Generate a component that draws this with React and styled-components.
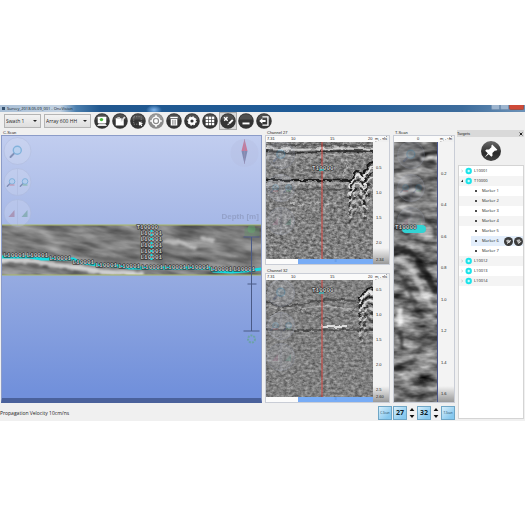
import React from 'react';
import styled, { createGlobalStyle } from 'styled-components';

const GlobalStyle = createGlobalStyle`
  * {
    box-sizing: border-box;
  }
  body {
    margin: 0;
    background: #ffffff;
    font-family: "Open Sans", "Noto Sans", sans-serif;
    color: #222222;
  }
  button, select {
    font-family: inherit;
    margin: 0;
    padding: 0;
  }
`;

const Page = styled.main`
  padding-top: 105px;
`;

const Window = styled.div`
  background: #f0f0f0;
`;

const TitleBar = styled.header`
  display: flex;
  align-items: center;
  height: 7px;
  padding: 0 1px 0 2px;
  background:
    radial-gradient(ellipse 8px 5px at 154px 5px, #7fb4ec, transparent),
    linear-gradient(90deg, #a9bfd6 0, #c3d2e2 60px, #4c7fae 76px, #21588f 100px, #1f5b97 60%, #3d6c9c 88%, #6d93b8 100%);
`;

const AppIcon = styled.span`
  width: 3px;
  height: 3px;
  margin-right: 2px;
  background: #35506e;
`;

const Title = styled.h1`
  flex: 1;
  margin: 0;
  font-size: 4px;
  line-height: 6px;
  font-weight: 400;
  color: #0c1722;
`;

const WindowButton = styled.button`
  width: ${(props) => (props.$close ? '15px' : '9px')};
  height: 5px;
  align-self: flex-start;
  border: 1px solid ${(props) => (props.$close ? '#a05048' : '#7592b2')};
  border-top: 0;
  border-radius: 0 0 2px 2px;
  background: ${(props) => (props.$close ? '#cf4a38' : '#9db5cf')};
`;

const Toolbar = styled.div`
  display: flex;
  align-items: center;
  gap: 2px;
  height: 18px;
  padding-left: 4px;
`;

const SelectBox = styled.span`
  position: relative;
  width: ${(props) => props.$width};
  height: 14px;
  margin-right: 1px;

  &::after {
    content: '';
    position: absolute;
    top: 6px;
    right: 4px;
    border: 2px solid transparent;
    border-top-color: #222222;
    pointer-events: none;
  }
`;

const Select = styled.select`
  appearance: none;
  display: block;
  width: 100%;
  height: 100%;
  padding: 0 0 0 1px;
  border: 1px solid #b4b4b4;
  border-radius: 0;
  background: linear-gradient(#f3f3f3, #dedede);
  color: #222222;
  font-size: 5px;
`;

const ToolButton = styled.button`
  display: grid;
  place-items: center;
  width: 16px;
  height: 16px;
  border: 0;
  border-radius: ${(props) => (props.$active ? '0' : '50%')};
  outline: ${(props) => (props.$active ? '1px solid #aaaaaa' : 'none')};
  background: ${(props) => (props.$active ? '#d8d8d8' : 'none')};
`;

const Body = styled.div`
  display: grid;
  grid-template-columns: minmax(0, 1fr) 68px;
`;

const Scans = styled.div`
  display: grid;
  grid-template-columns: minmax(0, 1fr) 125px 62px;
  gap: 3px;
  padding: 0 2px 0 1px;
`;

const Channels = styled.div`
  display: grid;
  gap: 3px;
`;

const PanelTitle = styled.h2`
  margin: 0;
  padding-left: 2px;
  height: 5px;
  font: 400 4px/5px "Liberation Sans", sans-serif;
`;

const PanelBox = styled.div`
  border: 1px solid #c9cdd6;
  background: #f4f4f4;
`;

const ScanBox = styled(PanelBox)`
  height: 268px;
  overflow: hidden;
  border-color: #8c9cc8;
  background: linear-gradient(#c1cdef, #92a8e0 58%, #7190db 98%);
  border-bottom: 5px solid #4a619b;
`;

const Drawing = styled.svg`
  display: block;
  width: 100%;
  height: ${(props) => props.$height};
`;

const PlotRow = styled.div`
  display: grid;
  grid-template-columns: minmax(0, 1fr) 16px;
`;

const Ruler = styled.div`
  display: grid;
  grid-template-columns: ${(props) => props.$columns};
  height: 6px;
  padding-left: 1px;
  background: #fafafa;
  font: 400 4px/6px "Liberation Sans", sans-serif;
`;

const Units = styled.div`
  display: flex;
  justify-content: space-between;
  padding: 0 2px;
  background: linear-gradient(155deg, #fafafa 49%, #999999 50%, #f0f0f0 54%);
  font: 400 4px/6px "Liberation Sans", sans-serif;
`;

const Scale = styled.div`
  display: flex;
  flex-direction: column;
  justify-content: ${(props) => (props.$even ? 'space-between' : 'flex-start')};
  padding: ${(props) => props.$padding};
  background: linear-gradient(#f3f3f3 calc(100% - 16px), #999999);
  font: 400 4px/4px "Liberation Sans", sans-serif;
`;

const ScaleLabel = styled.span`
  height: ${(props) => props.$step || '4px'};
  padding-left: 3px;
`;

const ScrollTrack = styled.div`
  height: 5px;
  padding-left: 30%;
  background: #fbfbfb;
`;

const ScrollThumb = styled.div`
  height: 5px;
  background: #78acf5;
  color: #3f78c8;
  font-size: 4px;
  line-height: 4px;
  text-align: center;
`;

const Footer = styled.footer`
  display: flex;
  align-items: center;
  gap: 1px;
  height: 18px;
  padding: 3px 2px 1px 0;
`;

const Status = styled.p`
  flex: 1;
  margin: 0;
  font-size: 5px;
  line-height: 8px;
`;

const BlueButton = styled.button`
  width: 14px;
  height: 14px;
  border: 1px solid #6fa6c6;
  background: linear-gradient(135deg, #d9effb, #86c8ee 80%);
  color: ${(props) => (props.$number ? '#0a1c28' : '#23475c')};
  font-size: ${(props) => (props.$number ? '7px' : '3px')};
  font-weight: ${(props) => (props.$number ? '700' : '400')};
  line-height: 12px;
  white-space: nowrap;
`;

const Spinner = styled.div`
  display: grid;
  justify-items: center;
  gap: 2px;
  width: 8px;
`;

const SpinButton = styled.button`
  display: grid;
  place-items: center;
  width: 6px;
  height: 5px;
  border: 0;
  background: none;
`;

const Sidebar = styled.aside`
  display: flex;
  flex-direction: column;
  padding-right: 1px;
`;

const SidebarHeader = styled.div`
  display: flex;
  justify-content: space-between;
  align-items: center;
  height: 7px;
  padding-right: 1px;
  background: #d9d9d9;
  font: 400 4px/7px "Liberation Sans", sans-serif;
`;

const SidebarTitle = styled.h2`
  margin: 0;
  font: inherit;
`;

const CloseButton = styled.button`
  display: grid;
  place-items: center;
  width: 4px;
  height: 5px;
  border: 0;
  background: none;
`;

const PinButton = styled.button`
  align-self: center;
  width: 20px;
  height: 20px;
  margin: 4px 0;
  border: 0;
  border-radius: 50%;
  background: linear-gradient(#6b6b6b, #2b2b2b 60%, #444444);
`;

const Tree = styled.ul`
  flex: 1;
  margin: 0 0 2px 1px;
  padding: 0;
  list-style: none;
  border: 1px solid #d4d4d4;
  background: #ffffff;
  font-size: 4px;
`;

const TreeRow = styled.li`
  display: flex;
  align-items: center;
  gap: ${(props) => (props.$child ? '5px' : '2px')};
  height: 10px;
  margin-left: ${(props) => (props.$selected ? '12px' : '0')};
  padding-left: ${(props) => (props.$selected ? '4px' : props.$child ? '16px' : '2px')};
  background: ${(props) => (props.$selected ? '#e3eefb' : props.$shaded ? '#f4f4f4' : '#ffffff')};
`;

const Bullet = styled.span`
  width: 2px;
  height: 2px;
  border-radius: 50%;
  background: #111111;
`;

const RowName = styled.span`
  flex: 1;
  line-height: 10px;
  white-space: nowrap;
`;

const RowActions = styled.span`
  display: flex;
  gap: 1px;
`;

const RowButton = styled.button`
  display: grid;
  place-items: center;
  width: 9px;
  height: 9px;
  border: 0;
  border-radius: 50%;
  background: #3c3c3c;
`;

// White glyphs of the toolbar, drawn in a 15 x 15 box
const glyphs = {
  view: (
    <>
      <rect x="3.5" y="3.5" width="8" height="6" rx="0.5" fill="#fff" />
      <path d="M2.8 12.2l1.8-2.3h5.8l1.8 2.3z" fill="#e4e4e4" />
      <circle cx="7" cy="6.2" r="1.6" fill="#49b83a" />
    </>
  ),
  note: (
    <>
      <path d="M3.5 5h5.5v2.2l2-2v6.6H3.5z" fill="#fff" />
      <path d="M7.8 7.4l3.6-4.2 1.3 1.1-3.6 4z" fill="#ddd" />
      <path d="M5 3.8h2.5v1.6H5z" fill="#ccc" />
    </>
  ),
  select: (
    <>
      <rect x="3.5" y="3.5" width="7" height="7" fill="none" stroke="#aaa" strokeWidth="0.6" strokeDasharray="1.2 1" />
      <path d="M8.2 8l4 1.6-1.6.7 1 1.5-1 .7-1-1.6-1 1z" fill="#fff" />
    </>
  ),
  target: (
    <>
      <circle cx="7.5" cy="7.5" r="3.6" fill="none" stroke="#fff" strokeWidth="1.3" />
      <circle cx="7.5" cy="7.5" r="1.8" fill="#fff" />
      <path d="M7.5 2v2M7.5 11v2M2 7.5h2M11 7.5h2" stroke="#fff" strokeWidth="1.6" />
    </>
  ),
  trash: (
    <>
      <path d="M4 3.4h7v1.6H4zM4.4 5.6h6.2v6.2H4.4z" fill="#fff" />
      <path d="M6.2 6.4v4.6M7.5 6.4v4.6M8.8 6.4v4.6" stroke="#555" strokeWidth="0.5" />
    </>
  ),
  gear: (
    <>
      <circle cx="7.5" cy="7.5" r="2.6" fill="none" stroke="#fff" strokeWidth="2.2" />
      <circle cx="7.5" cy="7.5" r="3.9" fill="none" stroke="#fff" strokeWidth="1" strokeDasharray="1.5 1.56" />
    </>
  ),
  grid: [0, 1, 2].map((row) =>
    [0, 1, 2].map((col) => (
      <rect key={`${row}${col}`} x={3.4 + col * 2.9} y={3.4 + row * 2.9} width="2.3" height="2.3" fill="#fff" />
    ))
  ),
  tools: (
    <>
      <path d="M3.8 4l3.4 3.2M7 3.8L4 7.2" stroke="#fff" strokeWidth="1.3" />
      <path d="M8.6 9.8l3.4-3.4" stroke="#fff" strokeWidth="1.8" />
      <path d="M6.8 11.6l.8-2 1.2 1.2z" fill="#fff" />
    </>
  ),
  minimise: <path d="M4.2 9.8h6.6" stroke="#fff" strokeWidth="1.8" />,
  exit: (
    <>
      <path d="M6 3.6h5.2v7.8H6" fill="none" stroke="#fff" strokeWidth="1.3" />
      <path d="M3 7.5l3-2.6v1.6h3v2H6v1.6z" fill="#fff" />
    </>
  ),
};

const tools = [
  { name: 'view', label: 'View' },
  { name: 'note', label: 'Notes' },
  { name: 'select', label: 'Select area' },
  { name: 'target', label: 'Locate', disabled: true },
  { name: 'trash', label: 'Delete' },
  { name: 'gear', label: 'Settings' },
  { name: 'grid', label: 'Grid' },
  { name: 'tools', label: 'Mark targets', active: true },
  { name: 'minimise', label: 'Collapse' },
  { name: 'exit', label: 'Exit' },
];

const ToolIcon = ({ name, disabled }) => (
  <svg width="16" height="16" viewBox="0 0 15 15" aria-hidden="true">
    <circle cx="7.5" cy="7.5" r="7.3" fill={disabled ? '#8b8b8b' : '#343434'} />
    <path d="M1.2 6a6.5 6.5 0 0 1 12.6 0z" fill="#fff" opacity="0.14" />
    {glyphs[name]}
  </svg>
);

// Grey noise, stretched along x or y by the frequency pair
const NoiseFilter = ({ id, frequency, seed, gain, octaves = 3, level = 0.5 }) => (
  <filter id={id} x="0" y="0" width="100%" height="100%" colorInterpolationFilters="sRGB">
    <feTurbulence type="fractalNoise" baseFrequency={frequency} numOctaves={octaves} seed={seed} />
    <feColorMatrix
      values={`${gain} 0 0 0 ${level - gain / 2} ${gain} 0 0 0 ${level - gain / 2} ${gain} 0 0 0 ${level - gain / 2} 0 0 0 0 1`}
    />
  </filter>
);

const RoughFilter = ({ id, scale, blur }) => (
  <filter id={id} x="-10%" y="-10%" width="120%" height="120%" colorInterpolationFilters="sRGB">
    <feTurbulence type="fractalNoise" baseFrequency="0.12 0.2" numOctaves="2" seed="8" result="n" />
    <feDisplacementMap in="SourceGraphic" in2="n" scale={scale} xChannelSelector="R" yChannelSelector="G" />
    <feGaussianBlur stdDeviation={blur} />
  </filter>
);

const Marker = ({ x, y, children }) => (
  <text
    x={x}
    y={y}
    fontFamily="Liberation Mono, monospace"
    fontSize="6"
    fontWeight="700"
    fill="#d0d0d0"
    stroke="#1c1c1c"
    strokeWidth="1"
    paintOrder="stroke"
  >
    {children}
  </text>
);

const Magnifier = ({ x, y, size }) => (
  <g transform={`translate(${x} ${y}) scale(${size})`}>
    <path d="M-2.4 2.4L-6 6" stroke="#5c6b92" strokeWidth="2" strokeLinecap="round" />
    <circle cx="0.8" cy="-0.8" r="4" fill="#a8d8f4" fillOpacity="0.5" stroke="#5ba3cf" strokeWidth="1.4" />
  </g>
);

// Zoom, zoom in/out and contrast rounds that lie over every scan
const ViewControls = ({ x, ys, strength }) => (
  <g opacity={strength}>
    {ys.map((y) => (
      <circle key={y} cx={x} cy={y} r="13.5" fill="#dfe4f2" fillOpacity="0.4" stroke="#a9b3d2" strokeWidth="0.6" />
    ))}
    <Magnifier x={x - 1} y={ys[0]} size={1} />
    <path d={`M${x} ${ys[1] - 13}v26M${x} ${ys[2] - 13}v26`} stroke="#a9b3d2" strokeWidth="0.5" />
    <Magnifier x={x - 6} y={ys[1]} size={0.7} />
    <Magnifier x={x + 7} y={ys[1]} size={0.7} />
    <path d={`M${x - 8} ${ys[1] + 3}h5`} stroke="#d06a78" />
    <path d={`M${x + 5} ${ys[1] + 3}h5`} stroke="#60b27a" />
    <path d={`M${x - 9} ${ys[2] + 4}l6-7v7z`} fill="#a87f99" />
    <path d={`M${x + 4} ${ys[2] + 4}l6-7v7z`} fill="#76a79c" />
  </g>
);

const lineMarkers = [
  [2, 121], [25, 121], [48, 124], [71, 128], [94, 131], [117, 132],
  [140, 133], [163, 133], [186, 133], [209, 135], [232, 135],
];

const CScan = () => (
  <Drawing $height="262px" viewBox="0 0 260 262" preserveAspectRatio="xMidYMin slice" role="img" aria-label="C-Scan">
    <defs>
      <NoiseFilter id="swath-noise" frequency="0.03 0.12" seed="4" gain={0.55} level={0.49} />
      <RoughFilter id="swath-rough" scale="4" blur="1.2" />
      <clipPath id="swath-clip">
        <rect x="-200" y="89" width="660" height="50" />
      </clipPath>
    </defs>
    <g clipPath="url(#swath-clip)">
      <rect x="-200" y="0" width="660" height="240" filter="url(#swath-noise)" transform="rotate(10 130 114)" />
      <g filter="url(#swath-rough)" fill="none" strokeLinecap="round">
        <path d="M0 124L34 125 50 129 80 132 100 136 140 138" stroke="#f4f4f4" strokeWidth="5" opacity="0.7" />
        <path d="M163 105l16 1 14 6M200 102l12 2" stroke="#e4e4e4" strokeWidth="4" opacity="0.6" />
        <path d="M0 116h60l40 7h150" stroke="#444" strokeWidth="4" opacity="0.25" />
      </g>
    </g>
    <path d="M-200 89h660M-200 139h660" stroke="#a9b865" strokeWidth="1" />
    <path
      d="M0 121h28l12 2h32l6 3 18 3 20 1 12 2h80l4 3 18 1 14-1 16-2"
      fill="none"
      stroke="#16dbe0"
      strokeWidth="3"
    />
    {[0, 1, 2, 3, 4].map((row) => (
      <Marker key={row} x="139" y={99 + row * 6}>L10001</Marker>
    ))}
    <path d="M150 94v32" stroke="#16dbe0" strokeWidth="2" strokeDasharray="2 2" />
    <Marker x="135" y="93">T10000</Marker>
    {lineMarkers.map(([x, y]) => (
      <Marker key={x} x={x} y={y}>L10001</Marker>
    ))}
    <text x="220" y="83" fontFamily="Liberation Sans, sans-serif" fontSize="8" fontWeight="700" fill="#8a96bb" opacity="0.7">
      Depth [m]
    </text>
    <rect x="243" y="92" width="15" height="8" fill="#5f8b66" opacity="0.4" />
    <ellipse cx="250" cy="93" rx="4" ry="4" fill="#62a86c" opacity="0.5" />
    <path d="M250 101v94M242 101h16M246 148h9M242 195h16" stroke="#4a5a86" strokeWidth="1" />
    <circle cx="250" cy="203" r="3.5" fill="none" stroke="#6ca3a6" strokeWidth="2" strokeDasharray="2 1" />
    <ViewControls x={16} ys={[15, 46, 77]} strength={0.6} />
    <g opacity="0.6">
      <circle cx="243" cy="17" r="14" fill="#b4bce0" fillOpacity="0.6" />
      <path d="M243 3l3 12h-6z" fill="#cc4766" />
      <path d="M243 28l3-13h-6z" fill="#5b638c" />
      <path d="M243 3v25" stroke="#8a6d91" strokeWidth="0.5" />
    </g>
  </Drawing>
);

// Stacked reflections that open downward from an apex
const Hyperbolas = ({ x, y, count, step, spread }) =>
  Array.from({ length: count }, (_, i) => (
    <path
      key={i}
      d={`M${x - spread} ${y + i * step + 12}Q${x - spread / 3} ${y + i * step} ${x} ${y + i * step}Q${x + spread / 3} ${y + i * step} ${x + spread} ${y + i * step + 12}`}
      fill="none"
      stroke={i % 2 ? '#f4f4f4' : '#0c0c0c'}
      strokeWidth="2"
      strokeDasharray={i > 3 ? '5 3' : 'none'}
      opacity={0.9 - i * 0.05}
    />
  ));

const ChannelImage = ({ id, seed, first }) => (
  <Drawing $height="117px" viewBox="0 0 107 117" preserveAspectRatio="xMidYMin slice" role="img" aria-label="Radargram">
    <defs>
      <NoiseFilter id={`${id}-noise`} frequency="0.28 0.4" seed={seed} gain={first ? 0.6 : 0.48} level={0.5} />
      <RoughFilter id={`${id}-rough`} scale="5" blur="0.5" />
    </defs>
    <rect width="107" height="117" filter={`url(#${id}-noise)`} />
    {first ? (
      <g filter={`url(#${id}-rough)`} fill="none">
        <path d="M0 3h107" stroke="#222" strokeWidth="2" opacity="0.4" />
        <path d="M0 6q26 3 55 1t52 1" stroke="#eee" strokeWidth="2" opacity="0.7" />
        <path d="M0 9q26 3 55 1t52 0" stroke="#111" strokeWidth="2" opacity="0.7" />
        <path d="M0 14h60l30-2h17" stroke="#ddd" strokeWidth="1" opacity="0.5" />
        <path d="M0 38h60l24 1" stroke="#0a0a0a" strokeWidth="2" opacity="0.85" />
        <path d="M0 42h84" stroke="#ddd" strokeWidth="2" opacity="0.35" />
        <path d="M0 47h90" stroke="#333" strokeWidth="2" opacity="0.4" />
        <path d="M24 61l12 3 10-4 12 3 12-2" stroke="#eee" strokeWidth="2" strokeDasharray="5 4" opacity="0.5" />
        <path d="M78 38l4-22M88 26l-6 20" stroke="#eee" strokeWidth="1" opacity="0.4" />
        <Hyperbolas x={92} y={29} count={11} step={4} spread={9} />
        <Hyperbolas x={107} y={20} count={8} step={5} spread={10} />
      </g>
    ) : (
      <g filter={`url(#${id}-rough)`} fill="none">
        <path d="M0 22q20 8 40 1t60 0" stroke="#222" strokeWidth="2" opacity="0.5" />
        <path d="M0 26q20 6 40 2t50 3" stroke="#ddd" strokeWidth="1" opacity="0.5" />
        <path d="M4 36q20-14 50 2q24 4 40-14" stroke="#333" strokeWidth="1" opacity="0.5" />
        <path d="M54 46h26" stroke="#f4f4f4" strokeWidth="2" opacity="0.8" />
        <path d="M0 50h107" stroke="#1a1a1a" strokeWidth="1" opacity="0.8" />
        <Hyperbolas x={104} y={8} count={12} step={4} spread={11} />
      </g>
    )}
    <ViewControls x={15} ys={first ? [13, 46, 79] : [13, 46, 77]} strength={0.35} />
    <path d="M56 0v117" stroke="#d2453f" strokeWidth="1" />
    <Marker x="46" y={first ? 28 : 12}>T10000</Marker>
    <path d={first ? 'M53 28h5' : 'M53 13h5'} stroke="#16dbe0" strokeWidth="1" />
  </Drawing>
);

const TScanImage = () => (
  <Drawing $height="260px" viewBox="0 0 44 260" preserveAspectRatio="xMidYMin slice" role="img" aria-label="T-Scan">
    <defs>
      <NoiseFilter id="t-noise" frequency="0.05 0.12" seed="21" gain={1} octaves={3} level={0.48} />
      <RoughFilter id="t-rough" scale="6" blur="1.2" />
    </defs>
    <rect width="44" height="260" filter="url(#t-noise)" />
    <g filter="url(#t-rough)" fill="none" strokeLinecap="round">
      <path d="M0 6h44M0 24h40" stroke="#222" strokeWidth="3" opacity="0.3" />
      <path d="M28 12l16-1" stroke="#0c0c0c" strokeWidth="4" opacity="0.8" />
      <path d="M8 20l14-2 20 3" stroke="#111" strokeWidth="3" opacity="0.7" />
      <path d="M28 16h16" stroke="#fff" strokeWidth="3" opacity="0.7" />
      <path d="M10 46l8-2 10 2" stroke="#0c0c0c" strokeWidth="4" opacity="0.8" />
      <path d="M6 52l12-3 14 4" stroke="#eee" strokeWidth="3" opacity="0.5" />
      <path d="M2 80q14-10 26-4t14 20" stroke="#222" strokeWidth="4" opacity="0.5" />
      <path d="M0 108q12-4 20 6t22 36" stroke="#080808" strokeWidth="6" opacity="0.7" />
      <path d="M0 118q14 0 20 14t18 32" stroke="#eee" strokeWidth="5" opacity="0.5" />
      <path d="M0 130q12 6 16 20t12 24" stroke="#222" strokeWidth="4" opacity="0.5" />
      <path d="M6 168v12" stroke="#fff" strokeWidth="5" opacity="0.7" />
      <path d="M7 192l1 14M0 226l16 2" stroke="#111" strokeWidth="4" opacity="0.6" />
      <path d="M26 205l16-8M20 240l20 4" stroke="#222" strokeWidth="3" opacity="0.6" />
      <path d="M24 216l18 4M8 236l16-2" stroke="#e8e8e8" strokeWidth="3" opacity="0.5" />
    </g>
    <ViewControls x={17} ys={[13, 46, 79]} strength={0.3} />
    <rect x="8" y="83" width="24" height="8" rx="4" fill="#33d3d3" />
    <Marker x="1" y="87">T10000</Marker>
    <path d="M43.5 0v260" stroke="#49558e" strokeWidth="1" />
  </Drawing>
);

const channelPanels = [
  {
    id: 'channel-27',
    title: 'Channel 27',
    seed: 3,
    padding: '24px 0 0',
    marks: [['0.5', 25], ['1.0', 25], ['1.5', 25], ['2.0', 17], ['2.34', 4]],
  },
  {
    id: 'channel-32',
    title: 'Channel 32',
    seed: 12,
    padding: '8px 0 0',
    marks: [['0.5', 25], ['1.0', 25], ['1.5', 25], ['2.0', 25], ['2.5', 7], ['2.60', 4]],
  },
];

const ChannelPanel = ({ panel, first }) => (
  <section>
    <PanelTitle>{panel.title}</PanelTitle>
    <PanelBox>
      <PlotRow>
        <Ruler $columns="24fr 39fr 38fr 5fr">
          <span>7.31</span>
          <span>10</span>
          <span>15</span>
          <span>20</span>
        </Ruler>
        <Units>
          <span>m</span>
          <span>ns</span>
        </Units>
      </PlotRow>
      <PlotRow>
        <div>
          <ChannelImage id={panel.id} seed={panel.seed} first={first} />
          <ScrollTrack>
            <ScrollThumb>≡</ScrollThumb>
          </ScrollTrack>
        </div>
        <Scale $padding={panel.padding}>
          {panel.marks.map(([mark, step]) => (
            <ScaleLabel key={mark} $step={`${step}px`}>{mark}</ScaleLabel>
          ))}
        </Scale>
      </PlotRow>
    </PanelBox>
  </section>
);

const depths = ['0.2', '0.4', '0.6', '0.8', '1.0', '1.2', '1.4', '1.6'];

const targets = [
  { name: 'L10001' },
  { name: 'T10000', open: true },
  { name: 'Marker 1', child: true },
  { name: 'Marker 2', child: true },
  { name: 'Marker 3', child: true },
  { name: 'Marker 4', child: true },
  { name: 'Marker 5', child: true },
  { name: 'Marker 6', child: true, selected: true },
  { name: 'Marker 7', child: true },
  { name: 'L10012' },
  { name: 'L10013' },
  { name: 'L10014' },
];

const TargetIcon = ({ open }) => (
  <svg width="11" height="8" viewBox="0 0 11 8" aria-hidden="true">
    {open ? <path d="M0 5l2-2.4V5z" fill="#222" /> : <path d="M.5 3l1.2 1L.5 5" fill="none" stroke="#aaa" strokeWidth="0.6" />}
    <circle cx="7.7" cy="4" r="3.2" fill="#1be3ea" />
    <circle cx="7.7" cy="4" r="1.2" fill="#c9fbfc" />
  </svg>
);

const Spin = ({ label }) => (
  <Spinner>
    <SpinButton aria-label={`${label} up`}>
      <svg width="6" height="5" viewBox="0 0 6 5"><path d="M3 1l2.4 3H.6z" fill="#111" /></svg>
    </SpinButton>
    <SpinButton aria-label={`${label} down`}>
      <svg width="6" height="5" viewBox="0 0 6 5"><path d="M3 4l2.4-3H.6z" fill="#111" /></svg>
    </SpinButton>
  </Spinner>
);

const App = () => (
  <>
    <GlobalStyle />
    <Page>
      <Window>
        <TitleBar>
          <AppIcon />
          <Title>Survey_2018.05.09_001 - OneVision</Title>
          <WindowButton aria-label="Minimise" />
          <WindowButton aria-label="Maximise" />
          <WindowButton $close aria-label="Close" />
        </TitleBar>
        <Toolbar>
          <SelectBox $width="37px">
            <Select aria-label="Swath">
              <option>Swath 1</option>
            </Select>
          </SelectBox>
          <SelectBox $width="47px">
            <Select aria-label="Array">
              <option>Array 600 HH</option>
            </Select>
          </SelectBox>
          {tools.map((tool) => (
            <ToolButton key={tool.name} $active={tool.active} aria-label={tool.label}>
              <ToolIcon name={tool.name} disabled={tool.disabled} />
            </ToolButton>
          ))}
        </Toolbar>
        <Body>
          <div>
            <Scans>
              <section>
                <PanelTitle>C-Scan</PanelTitle>
                <ScanBox>
                  <CScan />
                </ScanBox>
              </section>
              <Channels>
                {channelPanels.map((panel, index) => (
                  <ChannelPanel key={panel.id} panel={panel} first={index === 0} />
                ))}
              </Channels>
              <section>
                <PanelTitle>T-Scan</PanelTitle>
                <PanelBox>
                  <PlotRow>
                    <Ruler $columns="22fr 21fr">
                      <span />
                      <span>0</span>
                    </Ruler>
                    <Units>
                      <span>m</span>
                      <span>m</span>
                    </Units>
                  </PlotRow>
                  <PlotRow>
                    <TScanImage />
                    <Scale $even $padding="30px 0 6px">
                      {depths.map((depth) => (
                        <ScaleLabel key={depth}>{depth}</ScaleLabel>
                      ))}
                    </Scale>
                  </PlotRow>
                </PanelBox>
              </section>
            </Scans>
            <Footer>
              <Status>Propagation Velocity 10cm/ns</Status>
              <BlueButton>C-Scan</BlueButton>
              <BlueButton $number>27</BlueButton>
              <Spin label="Channel 27" />
              <BlueButton $number>32</BlueButton>
              <Spin label="Channel 32" />
              <BlueButton>T-Scan</BlueButton>
            </Footer>
          </div>
          <Sidebar>
            <SidebarHeader>
              <SidebarTitle>Targets</SidebarTitle>
              <CloseButton aria-label="Close targets">
                <svg width="4" height="4" viewBox="0 0 4 4"><path d="M.6.6l2.8 2.8M3.4.6L.6 3.4" stroke="#222" /></svg>
              </CloseButton>
            </SidebarHeader>
            <PinButton aria-label="Pin targets">
              <svg width="20" height="20" viewBox="0 0 20 20">
                <path d="M11.2 3.6l5.2 5.2-1.4 1-1-.3-2.6 2.6.1 2.6-1.2 1.1-2.6-2.6-4 3.2 3.1-4.1-2.6-2.6 1.2-1.2 2.6.1 2.6-2.6-.4-1z" fill="#fff" />
              </svg>
            </PinButton>
            <Tree>
              {targets.map((target, index) => (
                <TreeRow key={target.name} $child={target.child} $selected={target.selected} $shaded={index % 2 === 1}>
                  {target.child ? <Bullet /> : <TargetIcon open={target.open} />}
                  <RowName>{target.name}</RowName>
                  {target.selected && (
                    <RowActions>
                      <RowButton aria-label="Edit marker">
                        <svg width="9" height="9" viewBox="0 0 9 9"><path d="M2 3.5l2-1 2.6 1.2-1 2.4-2.4-.4z" fill="#bbb" /><path d="M3 6.8l4-3.6" stroke="#fff" strokeWidth="0.7" /></svg>
                      </RowButton>
                      <RowButton aria-label="Delete marker">
                        <svg width="9" height="9" viewBox="0 0 9 9"><path d="M2.4 3l3.2-.8.8 1.6-2.2 2.8z" fill="#bbb" /><path d="M4.6 6.6l2.4-2.4" stroke="#fff" /></svg>
                      </RowButton>
                    </RowActions>
                  )}
                </TreeRow>
              ))}
            </Tree>
          </Sidebar>
        </Body>
      </Window>
    </Page>
  </>
);

export default App;
